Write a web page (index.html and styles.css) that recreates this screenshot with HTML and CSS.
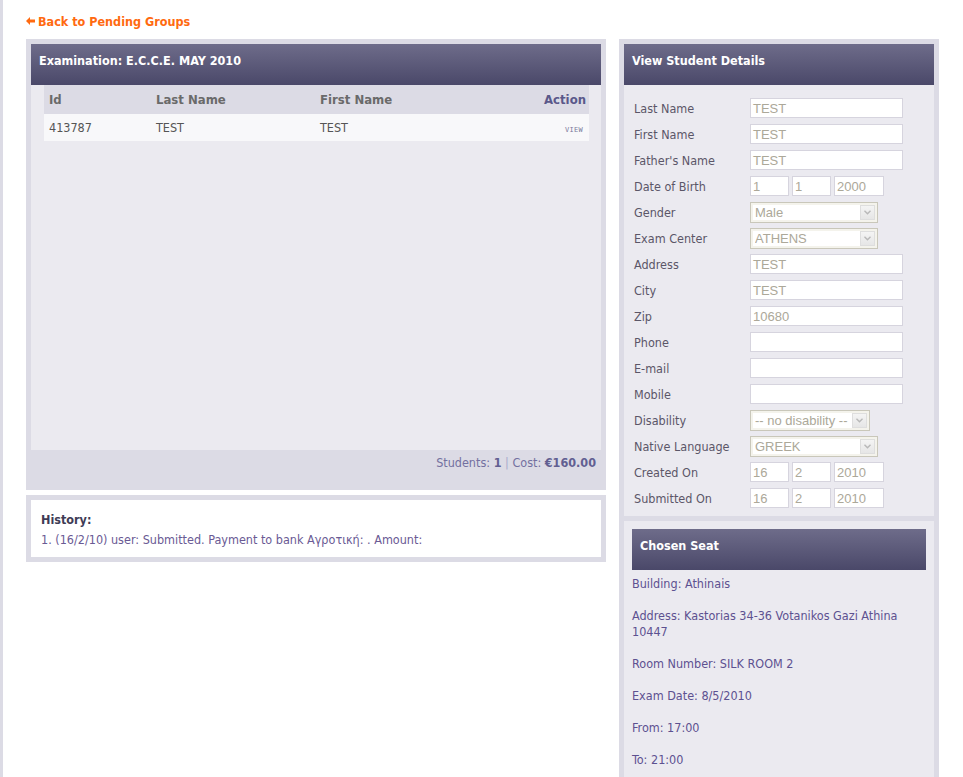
FILE: index.html
```html
<!DOCTYPE html>
<html>
<head>
<meta charset="utf-8">
<title>View Student</title>
<link rel="stylesheet" href="styles.css">
</head>
<body>
<div class="page">
  <a class="back" href="#"><svg class="back-arrow" width="9" height="8" viewBox="0 0 9 8"><path d="M0 4 L4 0 L4 2.5 L9 2.5 L9 5.5 L4 5.5 L4 8 Z" fill="#ff6a10"/></svg>Back to Pending Groups</a>
  <div class="columns">
    <div class="left">
      <div class="panel">
        <div class="panel-head">Examination: E.C.C.E. MAY 2010</div>
        <div class="exam-body">
          <table class="grid">
            <thead>
              <tr><th class="c-id">Id</th><th class="c-last">Last Name</th><th class="c-first">First Name</th><th class="c-act">Action</th></tr>
            </thead>
            <tbody>
              <tr><td>413787</td><td>TEST</td><td>TEST</td><td class="act"><a class="view" href="#">VIEW</a></td></tr>
            </tbody>
          </table>
        </div>
        <div class="exam-foot">Students: <b>1</b> <span class="sep">|</span> Cost: <b>€160.00</b></div>
      </div>
      <div class="panel history">
        <div class="history-body">
          <div class="history-title">History:</div>
          <div class="history-line">1. (16/2/10) user: Submitted. Payment to bank Αγροτική: . Amount:</div>
        </div>
      </div>
    </div>
    <div class="right">
      <div class="panel tall">
        <div class="panel-head">View Student Details</div>
        <div class="form">
          <div class="row"><span class="lbl">Last Name</span><span class="inp w-full">TEST</span></div>
          <div class="row"><span class="lbl">First Name</span><span class="inp w-full">TEST</span></div>
          <div class="row"><span class="lbl">Father's Name</span><span class="inp w-full">TEST</span></div>
          <div class="row"><span class="lbl">Date of Birth</span><span class="dates"><span class="inp w-d">1</span><span class="inp w-d">1</span><span class="inp w-y">2000</span></span></div>
          <div class="row"><span class="lbl">Gender</span><span class="sel w-sel"><span class="sel-val">Male</span><span class="sel-btn"><svg width="7" height="5" viewBox="0 0 7 5"><path d="M0.5 0.8 L3.5 3.8 L6.5 0.8" fill="none" stroke="#b8b8b8" stroke-width="1.4"/></svg></span></span></div>
          <div class="row"><span class="lbl">Exam Center</span><span class="sel w-sel"><span class="sel-val">ATHENS</span><span class="sel-btn"><svg width="7" height="5" viewBox="0 0 7 5"><path d="M0.5 0.8 L3.5 3.8 L6.5 0.8" fill="none" stroke="#b8b8b8" stroke-width="1.4"/></svg></span></span></div>
          <div class="row"><span class="lbl">Address</span><span class="inp w-full">TEST</span></div>
          <div class="row"><span class="lbl">City</span><span class="inp w-full">TEST</span></div>
          <div class="row"><span class="lbl">Zip</span><span class="inp w-full">10680</span></div>
          <div class="row"><span class="lbl">Phone</span><span class="inp w-full"></span></div>
          <div class="row"><span class="lbl">E-mail</span><span class="inp w-full"></span></div>
          <div class="row"><span class="lbl">Mobile</span><span class="inp w-full"></span></div>
          <div class="row"><span class="lbl">Disability</span><span class="sel w-sel2"><span class="sel-val">-- no disability --</span><span class="sel-btn"><svg width="7" height="5" viewBox="0 0 7 5"><path d="M0.5 0.8 L3.5 3.8 L6.5 0.8" fill="none" stroke="#b8b8b8" stroke-width="1.4"/></svg></span></span></div>
          <div class="row"><span class="lbl">Native Language</span><span class="sel w-sel"><span class="sel-val">GREEK</span><span class="sel-btn"><svg width="7" height="5" viewBox="0 0 7 5"><path d="M0.5 0.8 L3.5 3.8 L6.5 0.8" fill="none" stroke="#b8b8b8" stroke-width="1.4"/></svg></span></span></div>
          <div class="row"><span class="lbl">Created On</span><span class="dates"><span class="inp w-d">16</span><span class="inp w-d">2</span><span class="inp w-y">2010</span></span></div>
          <div class="row"><span class="lbl">Submitted On</span><span class="dates"><span class="inp w-d">16</span><span class="inp w-d">2</span><span class="inp w-y">2010</span></span></div>
        </div>
        <div class="seat">
          <div class="panel-head">Chosen Seat</div>
          <p>Building: Athinais</p>
          <p>Address: Kastorias 34-36 Votanikos Gazi Athina 10447</p>
          <p>Room Number: SILK ROOM 2</p>
          <p>Exam Date: 8/5/2010</p>
          <p>From: 17:00</p>
          <p>To: 21:00</p>
        </div>
      </div>
    </div>
  </div>
</div>
</body>
</html>
```

FILE: styles.css
```css
html, body {
  margin: 0;
  padding: 0;
  background: #ffffff;
}
body {
  font-family: "DejaVu Sans Condensed", "DejaVu Sans", sans-serif;
  font-stretch: semi-condensed;
  font-size: 12px;
  color: #555555;
}
.page {
  border-left: 3px solid #dcdbe5;
  min-height: 100vh;
  box-sizing: border-box;
  padding: 12px 0 0 23px;
}
.back {
  display: flex;
  align-items: center;
  height: 18px;
  color: #ff6a10;
  font-weight: bold;
  font-size: 12.5px;
  text-decoration: none;
  margin-bottom: 9px;
}
.back-arrow {
  margin-right: 3px;
}
.columns {
  display: flex;
  gap: 13px;
  align-items: flex-start;
}
.left {
  width: 580px;
}
.right {
  width: 320px;
}
.panel {
  background: #dcdbe5;
  padding: 5px;
}
.panel-head {
  height: 41px;
  box-sizing: border-box;
  padding: 9px 8px 0;
  line-height: 16px;
  color: #ffffff;
  font-weight: bold;
  font-size: 12.5px;
  background: linear-gradient(#6e6c8a, #4a4869);
}
.exam-body {
  background: #ebeaf0;
  height: 365px;
  padding: 0 12px 0 13px;
}
.grid {
  width: 100%;
  border-collapse: collapse;
}
.grid th {
  background: #dcdbe5;
  height: 29px;
  padding: 0 5px;
  text-align: left;
  font-size: 13px;
  font-weight: bold;
  color: #6a6a6a;
}
.grid th.c-act {
  text-align: right;
  color: #5a588a;
  padding-right: 3px;
}
.c-id { width: 97px; }
.c-last { width: 154px; }
.c-first { width: 150px; }
.grid td {
  background: #f8f8fa;
  height: 27px;
  padding: 0 5px;
  font-size: 12.5px;
  color: #555555;
}
.grid td.act {
  text-align: right;
  padding-right: 6px;
  vertical-align: top;
  padding-top: 6px;
  height: 21px;
}
.view {
  font-family: "DejaVu Sans Mono", monospace;
  font-size: 7px;
  letter-spacing: 0.3px;
  color: #7b7a9c;
  text-decoration: none;
}
.exam-foot {
  height: 35px;
  box-sizing: border-box;
  padding: 6px 5px 0 0;
  line-height: 14px;
  text-align: right;
  font-size: 12.5px;
  color: #7370a0;
}
.exam-foot b {
  color: #625f92;
}
.exam-foot .sep {
  color: #aaaacc;
}
.history {
  margin-top: 5px;
}
.history-body {
  background: #ffffff;
  padding: 10px 10px 7px;
  line-height: 20px;
  height: 57px;
  box-sizing: border-box;
}
.history-title {
  font-weight: bold;
  font-size: 12.5px;
  color: #3e3b55;
}
.history-line {
  color: #6a5a94;
  font-size: 12.5px;
}
.tall {
  padding-bottom: 30px;
}
.form {
  background: #ebeaf0;
  padding: 10px 0 5px 10px;
}
.row {
  display: flex;
  align-items: center;
  height: 26px;
}
.lbl {
  width: 116px;
  flex: none;
  font-size: 12.5px;
  color: #5b5668;
}
.inp {
  display: block;
  box-sizing: border-box;
  height: 20px;
  border: 1px solid #d6d4de;
  background: #ffffff;
  font-family: "Liberation Sans", Arial, sans-serif;
  font-size: 13px;
  line-height: 19px;
  padding: 0 2px;
  color: #aca899;
}
.w-full { width: 153px; }
.w-d { width: 39px; }
.w-y { width: 50px; }
.dates {
  display: flex;
  gap: 3px;
}
.sel {
  display: flex;
  align-items: center;
  box-sizing: border-box;
  height: 21px;
  border: 1px solid #c9c7ba;
  background: #ffffff;
  box-shadow: inset 0 0 0 2px #f4f3ec;
  padding: 0 2px 0 4px;
  font-family: "Liberation Sans", Arial, sans-serif;
  font-size: 13px;
  color: #aca899;
}
.w-sel { width: 128px; }
.w-sel2 { width: 120px; }
.sel-val {
  flex: 1;
  white-space: nowrap;
  overflow: hidden;
}
.sel-btn {
  flex: none;
  width: 15px;
  height: 15px;
  box-sizing: border-box;
  border: 1px solid #dedede;
  background: linear-gradient(#f4f4f4, #e6e6e6);
  display: flex;
  align-items: center;
  justify-content: center;
}
.seat {
  margin-top: 5px;
  background: #ebeaf0;
  padding: 8px 8px 20px;
}
.seat p {
  margin: 0 0 16px;
  line-height: 16px;
  font-size: 12.5px;
  color: #5d5190;
}
.seat .panel-head + p {
  margin-top: 6px;
}
```
